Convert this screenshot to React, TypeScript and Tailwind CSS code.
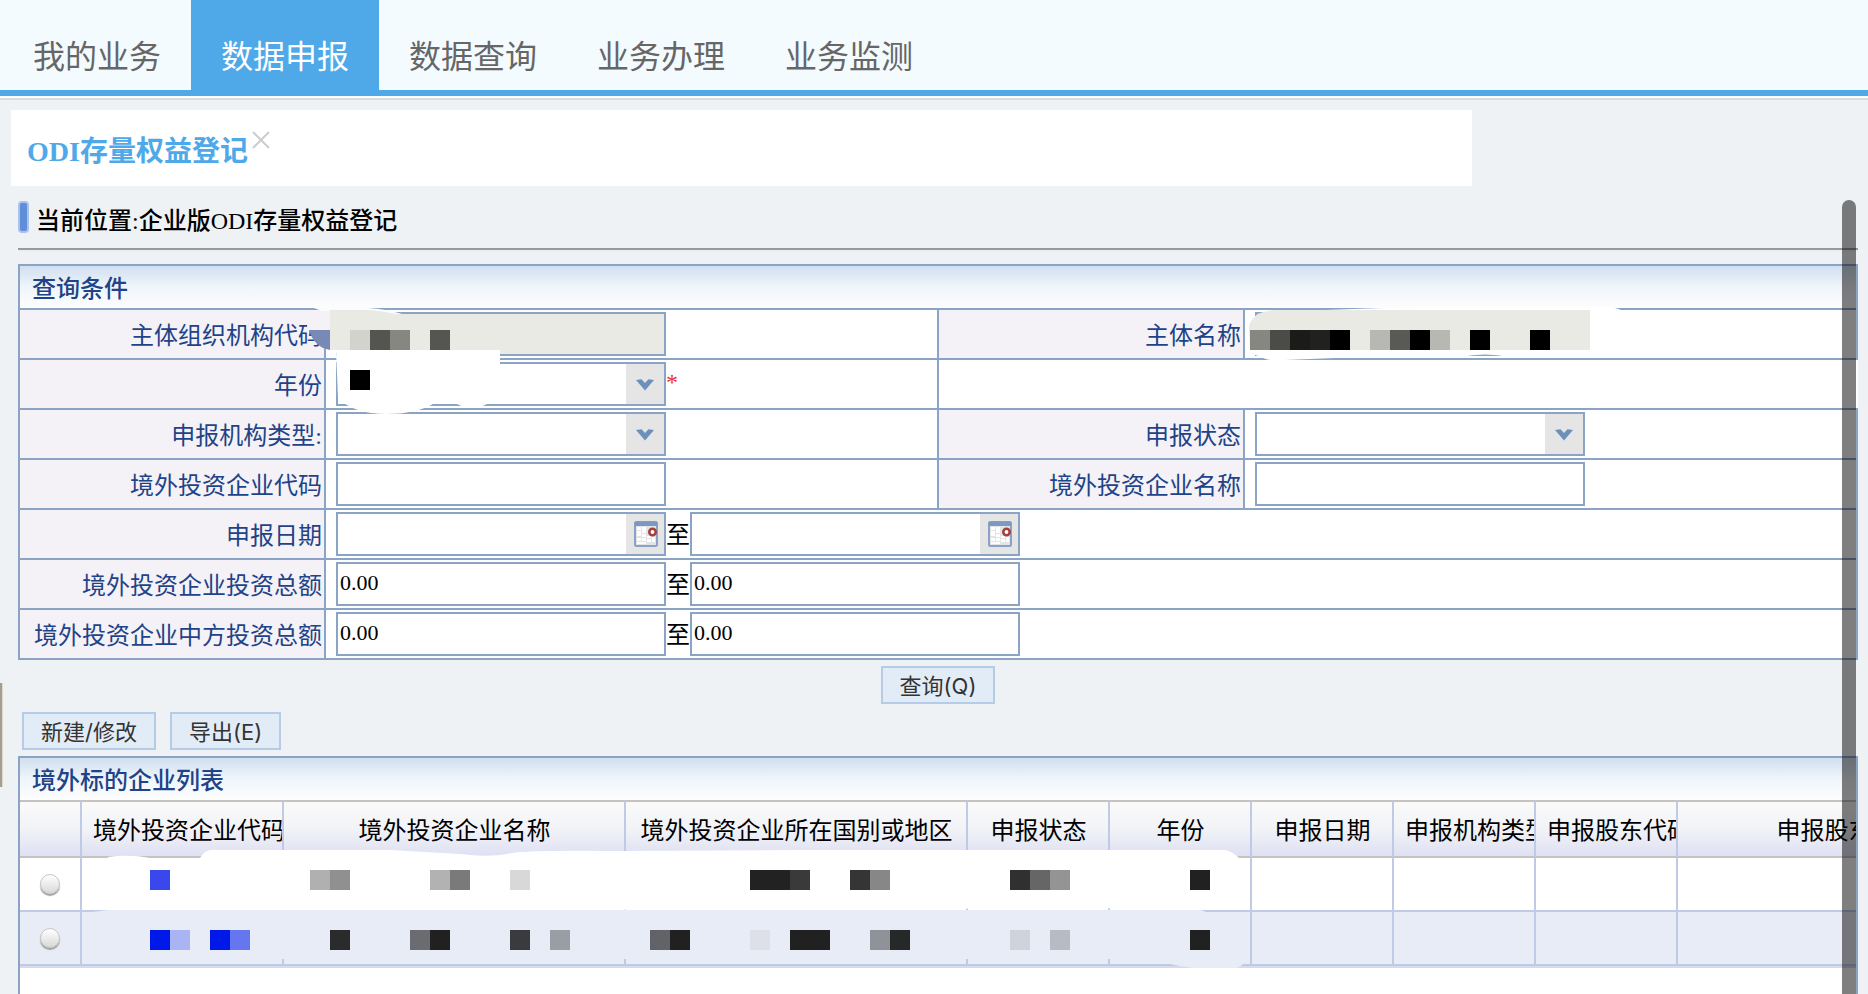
import type { ReactNode } from 'react';
import { clsx } from 'clsx';

type Block = { x: number; w?: number; fill: string };

const navItems = ['我的业务', '数据申报', '数据查询', '业务办理', '业务监测'];

const columns = [
  { title: '', width: 'w-[62px]' },
  { title: '境外投资企业代码', width: 'w-[202px]' },
  { title: '境外投资企业名称', width: 'w-[342px]' },
  { title: '境外投资企业所在国别或地区', width: 'w-[342px]' },
  { title: '申报状态', width: 'w-[142px]' },
  { title: '年份', width: 'w-[142px]' },
  { title: '申报日期', width: 'w-[142px]' },
  { title: '申报机构类型', width: 'w-[142px]' },
  { title: '申报股东代码', width: 'w-[142px]' },
  { title: '申报股东名称', width: 'w-[342px]' },
];

const codeBlocks: Block[] = [
  { x: 40, fill: '#d2d3cd' },
  { x: 60, fill: '#545451' },
  { x: 80, fill: '#878781' },
  { x: 120, fill: '#555552' },
];

const nameBlocks: Block[] = [
  { x: 5, fill: '#868781' },
  { x: 25, fill: '#4b4b48' },
  { x: 45, fill: '#1b1c19' },
  { x: 65, fill: '#21221f' },
  { x: 85, fill: '#000000' },
  { x: 125, fill: '#b7b8b3' },
  { x: 145, fill: '#595956' },
  { x: 165, fill: '#000000' },
  { x: 185, fill: '#b7b8b2' },
  { x: 225, fill: '#000000' },
  { x: 285, fill: '#000000' },
];

const firstRowBlocks: Block[] = [
  { x: 130, fill: '#3848ec' },
  { x: 290, fill: '#b0b0b0' },
  { x: 310, fill: '#909090' },
  { x: 410, fill: '#b2b2b2' },
  { x: 430, fill: '#7a7a7a' },
  { x: 490, fill: '#d8d8d8' },
  { x: 730, w: 40, fill: '#222222' },
  { x: 770, fill: '#3a3a3a' },
  { x: 830, fill: '#353535' },
  { x: 850, fill: '#878787' },
  { x: 990, fill: '#303030' },
  { x: 1010, fill: '#666666' },
  { x: 1030, fill: '#949494' },
  { x: 1170, fill: '#212121' },
];

const secondRowBlocks: Block[] = [
  { x: 130, fill: '#0018e8' },
  { x: 150, fill: '#a8b4f4' },
  { x: 190, fill: '#0018e8' },
  { x: 210, fill: '#6676ee' },
  { x: 310, fill: '#2b2b2b' },
  { x: 390, fill: '#6b6c71' },
  { x: 410, fill: '#212121' },
  { x: 490, fill: '#3a3b3e' },
  { x: 530, fill: '#9a9da3' },
  { x: 630, fill: '#626368' },
  { x: 650, fill: '#212121' },
  { x: 730, fill: '#dde0e8' },
  { x: 770, w: 40, fill: '#212121' },
  { x: 850, fill: '#8f9298' },
  { x: 870, fill: '#272929' },
  { x: 990, fill: '#cfd3dc' },
  { x: 1030, fill: '#b8bbc4' },
  { x: 1170, fill: '#212121' },
];

const Blocks = ({ items, y }: { items: Block[]; y: number }) => (
  <>
    {items.map((b) => (
      <rect key={b.x} x={b.x} y={y} width={b.w ?? 20} height="20" fill={b.fill} />
    ))}
  </>
);

const ChevronIcon = () => (
  <svg width="18" height="12" viewBox="0 0 18 12">
    <path d="M0 1 L5.5 0.3 L9 4 L12.5 0.3 L18 1 L9 11.5 Z" fill="#6b91bb" />
  </svg>
);

const CalendarIcon = () => (
  <svg width="24" height="26" viewBox="0 0 24 26">
    <rect x="1" y="1" width="22" height="24" rx="1.5" fill="#e3e4e6" stroke="#8ba2c8" strokeWidth="2" />
    <rect x="0.5" y="0.5" width="23" height="4.5" rx="1.5" fill="#7f98c2" />
    <g fill="#ffffff">
      <rect x="3" y="6" width="4" height="3" />
      <rect x="8" y="6" width="4" height="6" />
      <rect x="3" y="10" width="4" height="5" />
      <rect x="8" y="13" width="4" height="3" />
      <rect x="13" y="15" width="4" height="2" />
      <rect x="3" y="17" width="4" height="3" />
      <rect x="8" y="17" width="4" height="3" />
      <rect x="13" y="18" width="4" height="3" />
      <rect x="18" y="16" width="3" height="5" />
      <rect x="3" y="21" width="9" height="2" />
    </g>
    <circle cx="18.5" cy="11" r="3.2" fill="#ffffff" stroke="#a5403a" strokeWidth="2.6" />
  </svg>
);

const inputClass = 'h-11 w-[330px] shrink-0 border-2 border-[#8ba3c4] px-0.5 pb-0.5 text-[22px] text-black outline-none';

const SelectBox = ({ id }: { id: string }) => (
  <div className="flex h-11 w-[330px] shrink-0 border-2 border-[#8ba3c4] bg-white">
    <select id={id} className="min-w-0 flex-1 appearance-none bg-white text-[22px] outline-none">
      <option value="" />
    </select>
    <span className="flex w-[38px] items-center justify-center bg-[#e5e5e5] pt-0.5">
      <ChevronIcon />
    </span>
  </div>
);

const DateBox = ({ id, label }: { id: string; label?: string }) => (
  <div className="flex h-11 w-[330px] shrink-0 border-2 border-[#8ba3c4] bg-white">
    <input id={id} aria-label={label} className="min-w-0 flex-1 px-0.5 text-[22px] outline-none" />
    <button type="button" aria-label="日历" className="flex w-[38px] items-center justify-center bg-[#e5e5e5] pl-0.5">
      <CalendarIcon />
    </button>
  </div>
);

const To = () => <span className="pt-0.5">至</span>;

const FieldLabel = ({ htmlFor, children, second }: { htmlFor: string; children: ReactNode; second?: boolean }) => (
  <label
    htmlFor={htmlFor}
    className={clsx(
      'flex items-center justify-end whitespace-nowrap border-r-2 border-b-2 border-[#8ba3c4] bg-[#f4f2f6] pt-1 pr-0.5 text-2xl text-[#1f4388]',
      second && 'border-l-2',
    )}
  >
    {children}
  </label>
);

const Field = ({ children, wide, open }: { children?: ReactNode; wide?: boolean; open?: boolean }) => (
  <div
    className={clsx(
      'relative flex h-[50px] items-center border-b-2 border-[#8ba3c4] bg-white pl-2.5 text-2xl',
      wide && 'col-span-3',
      open && 'border-r-2',
    )}
  >
    {children}
  </div>
);

const PanelTitle = ({ children }: { children: ReactNode }) => (
  <h2 className="flex h-[42px] items-center bg-linear-to-b from-[#d1dff0] via-[#eff5fb] to-[#fdfdfe] px-3 pt-1 text-2xl font-medium text-[#1f4388]">
    {children}
  </h2>
);

const ActionButton = ({ children }: { children: ReactNode }) => (
  <button
    type="button"
    className="flex h-[38px] items-center border-2 border-[#b5cce8] bg-[#e2ecf6] px-[17px] pt-0.5 font-['Inter','Noto_Sans_CJK_SC',sans-serif] text-[22px] text-[#333333]"
  >
    {children}
  </button>
);

const QueryPanel = () => (
  <section className="border-t-2 border-l-2 border-[#8ba3c4]">
    <div className="border-r-2 border-b-2 border-[#8ba3c4]">
      <PanelTitle>查询条件</PanelTitle>
    </div>
    <div className="grid grid-cols-[306px_minmax(0,611fr)_308px_minmax(0,613fr)]">
      <FieldLabel htmlFor="orgCode">主体组织机构代码</FieldLabel>
      <Field>
        <input id="orgCode" readOnly className={clsx(inputClass, 'bg-[#e9eae4]')} />
        <svg
          width="400"
          height="110"
          viewBox="0 0 400 110"
          className="pointer-events-none absolute -top-1 -left-4 z-10 overflow-visible"
        >
          <path d="M4 2 L58 2 Q76 3 92 8 L20 8 Z" fill="#fafcfd" />
          <path d="M-3 5 L20 5 L20 44 L6 36 L-3 20 Z" fill="#f4f2f6" />
          <path d="M20 4 L58 4 Q72 5 86 8 L110 10 L200 10 L200 44 L20 44 Z" fill="#e9eae4" />
          <path d="M-1 24 L20 24 L20 44 Q4 41 -1 24 Z" fill="#7889b6" />
          <path d="M26 44 L190 44 L190 98 L177 98 Q162 106 147 98 L123 98 Q106 108 76 108 Q44 108 28 92 Z" fill="#ffffff" />
          <Blocks items={codeBlocks} y={24} />
          <rect x="40" y="64" width="20" height="20" fill="#000000" />
        </svg>
      </Field>
      <FieldLabel htmlFor="orgName" second>主体名称</FieldLabel>
      <Field open>
        <input id="orgName" readOnly className={clsx(inputClass, 'bg-[#e9eae4]')} />
        <svg width="400" height="60" viewBox="0 0 400 60" className="pointer-events-none absolute -top-1 left-0 z-10">
          <path d="M10 10 L80 4 Q130 2 180 1 L360 1 Q370 1 376 4 L345 5 L345 50 L265 51 Q240 46 215 51 L90 52 L40 54 Q28 56 18 52 L8 48 Z" fill="#ffffff" />
          <path d="M5 44 L4 20 Q8 5 30 4 L345 4 L345 44 Z" fill="#e9eae4" />
          <Blocks items={nameBlocks} y={24} />
        </svg>
      </Field>

      <FieldLabel htmlFor="year">年份</FieldLabel>
      <Field>
        <SelectBox id="year" />
        <span className="pb-1 text-2xl leading-6 text-[#ee3322]">*</span>
      </Field>
      <div className="col-span-2 border-b-2 border-l-2 border-[#8ba3c4] bg-white" />

      <FieldLabel htmlFor="orgType">申报机构类型:</FieldLabel>
      <Field>
        <SelectBox id="orgType" />
      </Field>
      <FieldLabel htmlFor="status" second>申报状态</FieldLabel>
      <Field open>
        <SelectBox id="status" />
      </Field>

      <FieldLabel htmlFor="entCode">境外投资企业代码</FieldLabel>
      <Field>
        <input id="entCode" className={inputClass} />
      </Field>
      <FieldLabel htmlFor="entName" second>境外投资企业名称</FieldLabel>
      <Field open>
        <input id="entName" className={inputClass} />
      </Field>

      <FieldLabel htmlFor="dateFrom">申报日期</FieldLabel>
      <Field wide open>
        <DateBox id="dateFrom" />
        <To />
        <DateBox id="dateTo" label="申报日期至" />
      </Field>

      <FieldLabel htmlFor="totalFrom">境外投资企业投资总额</FieldLabel>
      <Field wide open>
        <input id="totalFrom" defaultValue="0.00" className={inputClass} />
        <To />
        <input aria-label="境外投资企业投资总额至" defaultValue="0.00" className={inputClass} />
      </Field>

      <FieldLabel htmlFor="cnFrom">境外投资企业中方投资总额</FieldLabel>
      <Field wide open>
        <input id="cnFrom" defaultValue="0.00" className={inputClass} />
        <To />
        <input aria-label="境外投资企业中方投资总额至" defaultValue="0.00" className={inputClass} />
      </Field>
    </div>
  </section>
);

const EnterpriseTable = () => (
  <section className="flex-1 overflow-hidden border-x-2 border-t-2 border-[#8ba3c4] bg-white">
    <PanelTitle>境外标的企业列表</PanelTitle>
    <div className="relative overflow-hidden">
      <table className="w-[2000px] table-fixed border-separate border-spacing-0">
        <thead>
          <tr>
            {columns.map((c, i) => (
              <th
                key={i}
                className={clsx(
                  c.width,
                  'h-[58px] overflow-hidden border-y-2 border-y-[#c6c2c2] border-r-2 border-r-[#bfcae6] bg-linear-to-b from-[#fbfafb] via-[#f1f3f7] to-[#dfe0f3] p-0 text-2xl font-normal text-black',
                )}
              >
                <div className="flex overflow-hidden pt-1 pl-[11px]">
                  <span className="mx-auto whitespace-nowrap pr-2.5">{c.title}</span>
                </div>
              </th>
            ))}
          </tr>
        </thead>
        <tbody>
          {[0, 1].map((row) => (
            <tr key={row} className={row === 1 ? 'bg-[#e8ecf6]' : 'bg-white'}>
              {columns.map((c, i) => (
                <td key={i} className="h-[54px] border-r-2 border-b-2 border-[#bfcae6] p-0">
                  {i === 0 && (
                    <input
                      type="radio"
                      name="enterprise"
                      aria-label={`第${row + 1}行`}
                      className="mx-auto block size-5 appearance-none rounded-full border border-[#c4c4c4] bg-linear-to-b from-white to-[#d9d9d9] shadow-[0_2px_1px_#a0a0a0]"
                    />
                  )}
                </td>
              ))}
            </tr>
          ))}
        </tbody>
      </table>
      <div className="h-0.5 bg-[#d3dbec]" />
      <svg width="1240" height="180" viewBox="0 0 1240 180" className="pointer-events-none absolute top-0 left-0">
        <path d="M88 57 Q110 54 130 58 L180 58 Q184 51 190 50 L370 50 L440 54 Q470 58 492 53 Q510 50 600 51 L780 50 L1205 50 Q1212 51 1219 58 L1228 60 L1228 108 L88 111 Z" fill="#ffffff" />
        <path d="M88 110 L1181 110 L1186 112 L1200 112 L1200 159 L64 159 L64 113 Z" fill="#e8ecf6" />
        <path d="M1150 164 Q1180 171 1212 169 Q1220 168 1224 163 Z" fill="#e8ecf6" />
        <Blocks items={firstRowBlocks} y={70} />
        <Blocks items={secondRowBlocks} y={130} />
      </svg>
    </div>
  </section>
);

export default function App() {
  return (
    <div className="flex min-h-screen flex-col bg-[#eef2f5] font-['Liberation_Serif','Noto_Sans_CJK_SC',serif] text-black">
      <header className="border-b-2 border-[#dadde0] bg-white pb-0.5">
        <nav className="flex border-b-[6px] border-[#4fa9e9] bg-[#f3fbff] pl-[3px]">
          {navItems.map((item) => (
            <a
              key={item}
              href="#"
              className={clsx(
                'flex h-[90px] items-center px-[30px] pt-6 text-[32px] leading-10',
                item === '数据申报' ? 'bg-[#4fa9e9] text-white' : 'text-[#666666]',
              )}
            >
              {item}
            </a>
          ))}
        </nav>
      </header>

      <div className="mt-2.5 mr-[396px] ml-[11px] flex h-[76px] items-center bg-white px-4">
        <a href="#" className="pt-2 text-[28px] font-semibold text-[#4fa9e9]">ODI存量权益登记</a>
        <button type="button" aria-label="关闭" className="mb-4 ml-1">
          <svg width="18" height="18" viewBox="0 0 18 18" stroke="#cccccc" strokeWidth="2">
            <path d="M1 1 L17 17 M17 1 L1 17" />
          </svg>
        </button>
      </div>

      <main className="relative flex flex-1 flex-col pr-2.5 pl-[18px]">
        <div className="flex h-16 items-center gap-[7px] border-b-2 border-[#999999]">
          <span className="h-8 w-[11px] rounded-sm border-2 border-[#a9c2ec] bg-[#5f8dd8]" />
          <h1 className="pt-2 text-2xl font-medium">当前位置:企业版ODI存量权益登记</h1>
        </div>
        <div className="mb-3 h-0.5 bg-[#eeeeee]" />

        <QueryPanel />

        <div className="flex justify-center pt-1.5">
          <ActionButton>查询(Q)</ActionButton>
        </div>
        <div className="flex gap-3.5 px-1 pt-2 pb-1.5">
          <ActionButton>新建/修改</ActionButton>
          <ActionButton>导出(E)</ActionButton>
        </div>

        <EnterpriseTable />

        <div className="absolute top-[497px] left-0 h-[104px] w-[3px] border-r border-[#e0d9c4] bg-[#a39d98]" />
        <div className="absolute top-3.5 right-3 bottom-0 w-3.5 rounded-t-full bg-black/50" />
      </main>
    </div>
  );
}
